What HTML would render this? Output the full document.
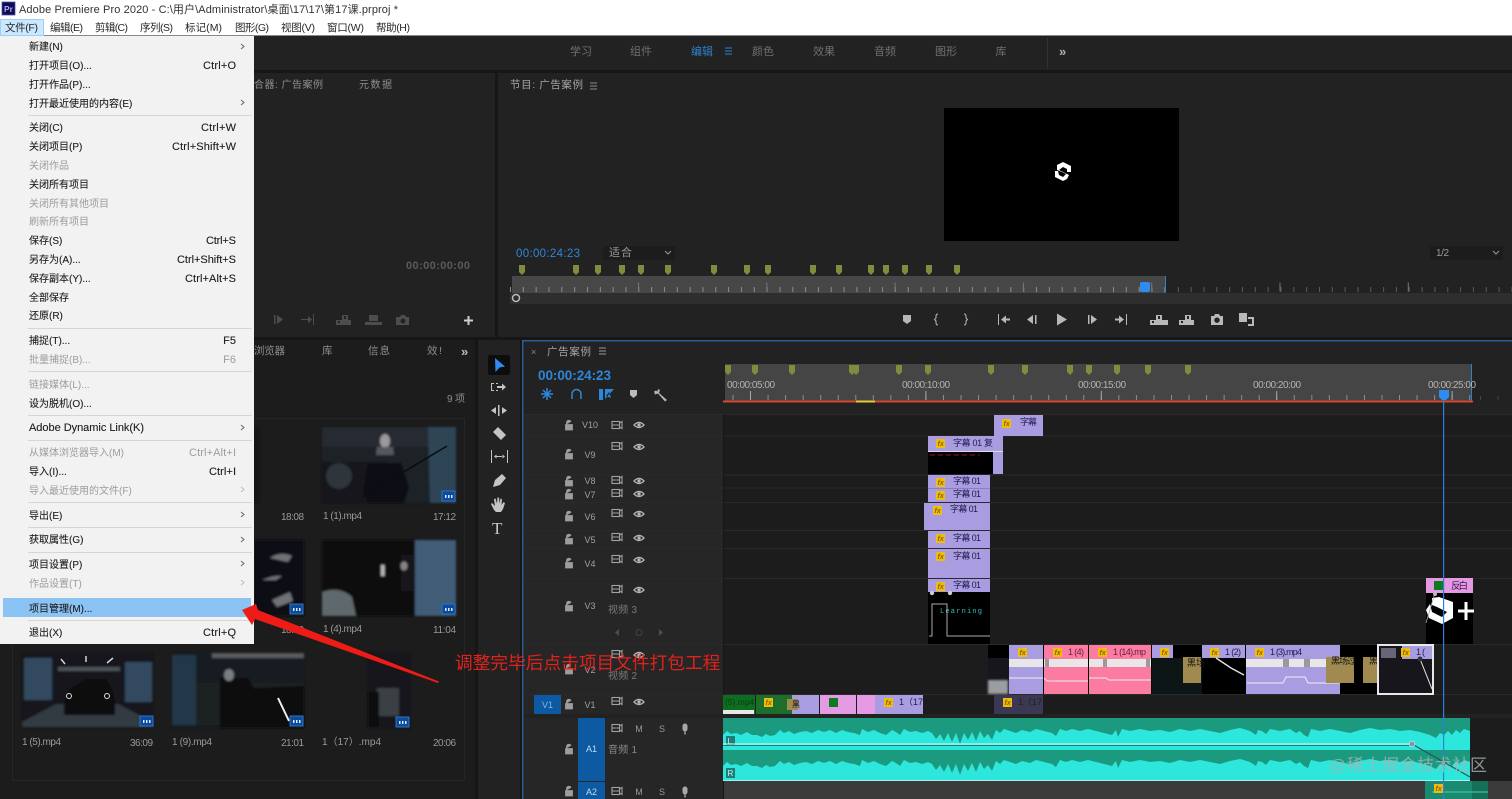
<!DOCTYPE html>
<html><head><meta charset="utf-8"><title>Adobe Premiere Pro 2020</title>
<style>
html,body{margin:0;padding:0;width:1512px;height:799px;overflow:hidden;background:#171717}
svg{display:block;position:absolute;left:0;top:0;font-family:"Liberation Sans","Noto Sans CJK SC",sans-serif}
.m text{font-size:10px;fill:#1e1e1e;stroke:#1e1e1e;stroke-width:.12}
.m .d{fill:#9c9c9c;stroke:none}
.m .r{text-anchor:end;font-size:11px}
.h{font-size:10px;fill:#8e8e8e}
.t{font-size:10px;fill:#8c8c8c}
.b{font-size:10px;fill:#9a9a9a}
.c{font-size:9px;fill:#221c50}
.f{font-size:7px;font-style:italic;font-weight:bold;fill:#8a6a00}
.l{font-size:9px;fill:#a8a8a8}
.tk{font-size:9px;fill:#a0a0a0;text-anchor:middle}
</style></head><body>
<svg width="1512" height="799" viewBox="0 0 1512 799" xmlns="http://www.w3.org/2000/svg">
<defs>
<filter id="bl" x="-10%" y="-10%" width="120%" height="120%"><feGaussianBlur stdDeviation="1"/></filter>
<filter id="s" x="-2%" y="-2%" width="104%" height="104%"><feGaussianBlur stdDeviation="0.3"/></filter>
<path id="mk" d="M-3-5h6v7l-3 3-3-3z" fill="#7f8b3c"/>
<path id="lk" d="M-3.500-.5h7v5.500h-7zM-2.500-.5v-2a2.400 2.400 0 0 1 4.600-.8" fill="#9d9d9d" stroke="#9d9d9d" stroke-width=".8"/>
<g id="fl" fill="none" stroke="#a0a0a0" stroke-width="1.100"><rect x="-5" y="-3.500" width="7.500" height="7"/><path d="M-5 0h7.500M2.500-2l2.500-1.500v7L2.500 2"/></g>
<g id="ey"><path d="M-5 0q5-5 10 0q-5 5-10 0z" fill="none" stroke="#b4b4b4" stroke-width="1.300"/><circle r="1.700" fill="#b4b4b4"/></g>
<g id="bd"><rect x="0" y="0" width="13" height="10" fill="#0d4c9a" stroke="#2f74c4" stroke-width="1"/><path d="M3 4h1.500v3H3zM6 4h1.500v3H6zM9 4h1.500v3H9z" fill="#dce9fa"/></g>
<g id="mic" fill="#a8a8a8"><rect x="-2.500" y="-5.500" width="5" height="8" rx="2.500"/><path d="M-.7 2.500h1.400v3h-1.400z"/></g>
<path id="wv" d="M723 735L727 731L731 734L736 733L741 735L747 732L752 735L757 735L762 737L766 734L770 736L775 735L780 730L784 733L789 731L794 734L800 732L806 731L812 733L818 730L824 732L830 730L836 733L842 730L848 732L854 733L860 735L862 729L868 732L874 730L880 733L886 735L892 730L896 732L900 735L904 729L910 732L916 731L922 733L928 731L932 733L936 739L940 734L944 741L948 733L952 742L956 733L960 744L964 733L968 740L972 732L976 741L980 731L984 738L988 734L992 740L996 730L1000 733L1004 729L1010 731L1016 733L1022 730L1030 732L1036 729L1044 731L1052 733L1056 736L1060 729L1066 731L1072 729L1080 731L1088 729L1096 731L1104 733L1112 735L1116 730L1118 737L1122 729L1130 731L1140 729L1150 731L1160 730L1170 732L1180 729L1190 731L1200 729L1210 731L1220 733L1230 730L1240 728L1250 731L1256 735L1258 730L1262 731L1266 734L1270 729L1280 731L1290 729L1296 733L1300 731L1304 735L1308 737L1311 729L1320 731L1330 729L1340 731L1350 733L1360 730L1370 728L1380 730L1390 729L1400 731L1410 730L1420 732L1430 735L1436 738L1440 733L1444 735L1448 731L1452 735L1456 730L1460 733L1464 729L1470 731V750H723z" fill="#2de7dc"/>
</defs>
<g filter="url(#s)">
<rect width="1512" height="799" fill="#171717"/>
<!-- top bar -->
<rect width="1512" height="36" fill="#fff"/>
<rect y="35" width="1512" height="1" fill="#888"/>
<rect x="2" y="2" width="13" height="13" fill="#100a50" stroke="#5550b0" stroke-width=".8"/>
<text x="4" y="12" font-size="8.500" font-weight="bold" fill="#b5a8ff">Pr</text>
<text x="19" y="13" font-size="11" fill="#333" textLength="379">Adobe Premiere Pro 2020 - C:\用户\Administrator\桌面\17\17\第17课.prproj *</text>
<rect x="0.500" y="19.500" width="43" height="16" fill="#cce8ff" stroke="#9cd0f5"/>
<g font-size="10.500" fill="#262626">
<text x="5" y="31" textLength="33">文件(F)</text><text x="50" y="31" textLength="33">编辑(E)</text><text x="95" y="31" textLength="33">剪辑(C)</text><text x="140" y="31" textLength="33">序列(S)</text><text x="185" y="31" textLength="37">标记(M)</text><text x="235" y="31" textLength="34">图形(G)</text><text x="281" y="31" textLength="34">视图(V)</text><text x="327" y="31" textLength="37">窗口(W)</text><text x="376" y="31" textLength="34">帮助(H)</text>
</g>
<!-- workspace bar -->
<rect y="36" width="1512" height="34" fill="#232323"/>
<g font-size="11" fill="#6f6f6f" text-anchor="middle"><text x="581" y="55">学习</text><text x="641" y="55">组件</text><text x="702" y="55" fill="#2d80d0">编辑</text><text x="763" y="55">颜色</text><text x="824" y="55">效果</text><text x="885" y="55">音频</text><text x="946" y="55">图形</text><text x="1001" y="55">库</text></g>
<path d="M725 48h7M725 51h7M725 54h7" stroke="#2d80d0" stroke-width="1"/>
<rect x="1047" y="38" width="1" height="31" fill="#333"/>
<text x="1059" y="56" font-size="13" font-weight="bold" fill="#b0b0b0">»</text>
<!-- left source panel -->
<rect x="254" y="73" width="241" height="264" fill="#232323"/>
<text x="254" y="88" class="h" textLength="69">合器: 广告案例</text>
<text x="359" y="88" class="h" textLength="33">元数据</text>
<text x="406" y="269" font-size="11" font-weight="bold" fill="#5a5a5a" textLength="64">00:00:00:00</text>
<g fill="#4e4e4e"><path d="M274 315h1.500v9H274zM277 315l6 4.500-6 4.500z"/><path d="M301 319h7v-3l4 3.500-4 3.500v-3h-7zM313 314h1v11h-1z"/><path d="M336 320h6v-5h6v5h3v5h-15zM338 321v2h2v-2zM344 316v3h2v-3z"/><path d="M365 322h17v3h-17zM369 315h9v6h-9z"/><path d="M396 317h4l1-2h4l1 2h3v8h-13zM403 318.500a2.500 2.500 0 1 0 .01 0z"/></g>
<path d="M468.500 316v9M464 320.500h9" stroke="#cfcfcf" stroke-width="2"/>
<!-- program panel -->
<rect x="498" y="73" width="1014" height="264" fill="#232323"/>
<text x="510" y="88" font-size="10.500" fill="#a4a4a4" textLength="73">节目: 广告案例</text>
<path d="M590 83h7M590 86h7M590 89h7" stroke="#8a8a8a"/>
<rect x="944" y="108" width="235" height="133" fill="#000"/>
<path d="M1063 162l8 4v6h-4v-3l-4-2-4 3 4 2 6 3-2 4-4 2-8-4v-6h3l1 4 4 2 3-3-4-2-5-2v-5z" fill="#fff"/>
<text x="516" y="257" font-size="11.500" fill="#2f86dc" textLength="64">00:00:24:23</text>
<rect x="603" y="246" width="72" height="14" fill="#1c1c1c"/><text x="609" y="256" font-size="11" fill="#9a9a9a" textLength="23">适合</text><path d="M665 251l3 3 3-3" fill="none" stroke="#999"/>
<rect x="1430" y="246" width="73" height="14" fill="#1c1c1c"/><text x="1436" y="256" font-size="10" fill="#9a9a9a" textLength="13">1/2</text><path d="M1493 251l3 3 3-3" fill="none" stroke="#999"/>
<use href="#mk" x="522" y="270"/><use href="#mk" x="576" y="270"/><use href="#mk" x="598" y="270"/><use href="#mk" x="622" y="270"/><use href="#mk" x="641" y="270"/><use href="#mk" x="668" y="270"/><use href="#mk" x="714" y="270"/><use href="#mk" x="747" y="270"/><use href="#mk" x="768" y="270"/><use href="#mk" x="813" y="270"/><use href="#mk" x="839" y="270"/><use href="#mk" x="871" y="270"/><use href="#mk" x="886" y="270"/><use href="#mk" x="905" y="270"/><use href="#mk" x="929" y="270"/><use href="#mk" x="957" y="270"/>
<rect x="512" y="276" width="653" height="17" fill="#464646"/>
<rect x="510" y="293" width="1002" height="11" fill="#2e2e2e"/>
<line x1="510" y1="289.500" x2="1165" y2="289.500" stroke="#8e8e8e" stroke-width="5" stroke-dasharray="1 11.830"/>
<line x1="1165" y1="289.500" x2="1512" y2="289.500" stroke="#5a5a5a" stroke-width="5" stroke-dasharray="1 11.830"/>
<line x1="638" y1="287" x2="1512" y2="287" stroke="#777" stroke-width="9" stroke-dasharray="1 127.300"/>
<rect x="1165" y="276" width="1" height="17" fill="#2d80d0"/>
<rect x="1140" y="282" width="10" height="10" rx="2" fill="#2d8cf0"/>
<circle cx="516" cy="298" r="3.500" fill="none" stroke="#bbb" stroke-width="1.500"/>
<!-- transport -->
<g fill="#b8b8b8">
<path d="M903 315h8v6l-4 3-4-3z"/>
<path d="M938 314q-2 0-2 2v2l-1.500 1.500 1.500 1.500v2q0 2 2 2" fill="none" stroke="#b8b8b8"/>
<path d="M964 314q2 0 2 2v2l1.500 1.500-1.500 1.500v2q0 2-2 2" fill="none" stroke="#b8b8b8"/>
<path d="M998 314h1v11h-1zM1001 319.500l5-4v3h4v2h-4v3z"/>
<path d="M1033 315v9l-6-4.500zM1035 315h1.500v9H1035z"/>
<path d="M1057 313.500l10 6-10 6z"/>
<path d="M1088 315h1.500v9H1088zM1091 315l6 4.500-6 4.500z"/>
<path d="M1115 318.500h4v-3l5 4-5 4v-3h-4zM1126 314h1v11h-1z"/>
<path d="M1150 320h6v-5h6v5h6v5h-18zM1152 321v2h2v-2zM1158 316v3h2v-3z"/>
<path d="M1179 320h6v-5h6v5h3v5h-15zM1181 321v2h2v-2zM1187 316v3h2v-3z"/>
<path d="M1211 316h3l1-2h4l1 2h3v9h-12zM1217 317.500a2.700 2.700 0 1 0 .01 0z"/>
<path d="M1239 313h8v9h-8z"/><path d="M1248 317h6v9h-6v-2h4v-5h-4z"/>
</g>
<!-- project panel -->
<rect x="0" y="340" width="475" height="459" fill="#1f1f1f"/>
<g font-size="10.500" fill="#8c8c8c"><text x="254" y="354" textLength="31">浏览器</text><text x="322" y="354">库</text><text x="368" y="354" textLength="22">信息</text><text x="427" y="354" textLength="15">效!</text></g>
<text x="461" y="356" font-size="13" font-weight="bold" fill="#bcbcbc">»</text>
<text x="447" y="402" class="t" textLength="18">9 项</text>
<rect x="12.500" y="418.500" width="452" height="362" fill="#1b1b1b" stroke="#272727"/>
<!-- thumbs -->
<g filter="url(#bl)">
<rect x="254" y="427" width="5" height="76" fill="#141618"/>
<rect x="322" y="427" width="134" height="76" fill="#1e2327"/>
<rect x="322" y="427" width="120" height="20" fill="#262c30"/>
<path d="M428 427h28v76h-26z" fill="#2e4557"/>
<rect x="322" y="462" width="65" height="41" fill="#15181b"/>
<ellipse cx="339" cy="476" rx="13" ry="13" fill="#2e363b"/>
<ellipse cx="385" cy="441" rx="5" ry="7" fill="#9d979e"/>
<path d="M377 447h16l1 8h-18z" fill="#55595e"/>
<path d="M368 463h33l8 24-5 16h-36l-5-12z" fill="#0e1013"/>
</g>
<path d="M362 497L447 446" stroke="#08090a" stroke-width="1.600"/>
<use href="#bd" x="442" y="491"/>
<g filter="url(#bl)">
<rect x="254" y="540" width="50" height="76" fill="#101113"/>
<path d="M270 558q10-7 22-2l-4 6-9-2zM262 580q12-5 20-4l-6 4zM272 600l18-8 3 9-16 6z" fill="#6e7276"/>
<rect x="322" y="540" width="134" height="76" fill="#0b0d10"/>
<rect x="415" y="540" width="41" height="76" fill="#3f5c76"/>
<rect x="401" y="555" width="12" height="36" fill="#15171a"/>
<ellipse cx="404" cy="566" rx="3.500" ry="4.500" fill="#8a8182"/>
<rect x="381" y="565" width="3.500" height="11" fill="#b8b8b8"/>
<path d="M322 592q18-6 30 5l4 19h-34z" fill="#5f686c"/>
</g>
<use href="#bd" x="290" y="604"/><use href="#bd" x="442" y="604"/>
<g filter="url(#bl)">
<rect x="22" y="653" width="131" height="75" fill="#14181c"/>
<rect x="24" y="658" width="28" height="42" fill="#33495e"/>
<rect x="125" y="662" width="27" height="40" fill="#33495e"/>
<rect x="58" y="667" width="62" height="4" fill="#4a5256"/>
<path d="M22 722l34-18h62l35 18v5H22z" fill="#333b42"/>
<path d="M86 679h20l6 10 3 13v13H64v-13l6-13z" fill="#080a0c"/>
<rect x="172" y="653" width="132" height="75" fill="#191d21"/>
<rect x="172" y="655" width="24" height="70" fill="#213748"/>
<rect x="212" y="653" width="92" height="5" fill="#565c60"/>
<rect x="196" y="683" width="108" height="42" fill="#1e2124"/>
<path d="M220 678h28l6 10 50-2v42h-84z" fill="#0a0b0d"/>
<ellipse cx="229" cy="675" rx="5" ry="6" fill="#7a7d82"/>
<rect x="368" y="653" width="42" height="75" fill="#16191c"/>
<rect x="377" y="688" width="22" height="28" fill="#3a4044"/>
<rect x="368" y="692" width="11" height="34" fill="#0a0a0c"/>
</g>
<path d="M278 698L289 721" stroke="#eee" stroke-width="2"/>
<path d="M61 659l4 5M113 658l-6 5M86 656v6" stroke="#cfd5d8" stroke-width="1.500"/>
<circle cx="69" cy="696" r="2.500" fill="none" stroke="#ddd"/><circle cx="107" cy="696" r="2.500" fill="none" stroke="#ddd"/>
<use href="#bd" x="140" y="716"/><use href="#bd" x="290" y="716"/><use href="#bd" x="396" y="717"/>
<g class="b">
<text x="281" y="520" textLength="23">18:08</text><text x="323" y="519" textLength="39">1 (1).mp4</text><text x="433" y="520" textLength="23">17:12</text>
<text x="281" y="633" textLength="23">18:10</text><text x="323" y="632" textLength="39">1 (4).mp4</text><text x="433" y="633" textLength="23">11:04</text>
<text x="22" y="745" textLength="39">1 (5).mp4</text><text x="130" y="746" textLength="23">36:09</text>
<text x="172" y="745" textLength="40">1 (9).mp4</text><text x="281" y="746" textLength="23">21:01</text>
<text x="322" y="745" textLength="59">1（17）.mp4</text><text x="433" y="746" textLength="23">20:06</text>
</g>
<!-- tool panel -->
<rect x="478" y="340" width="42" height="459" fill="#232323"/>
<rect x="488" y="355" width="22" height="20" rx="2" fill="#111"/>
<path d="M495 358L505 366.500L499.500 367.500L495.500 372z" fill="#2d8cf0"/>
<g fill="#c4c4c4">
<path d="M491 383h3v1h-3zM491 390h3v1h-3zM491 383h1v8h-1zM496 383h2v1h-2zM496 390h2v1h-2z"/><path d="M497 386h5v-2.500l4 3.500-4 3.500V388h-5z"/>
<path d="M498 405h1.500v11H498zM491 410.500l5-3.500v7zM507 410.500l-5-3.500v7z"/>
<path d="M493 432l5-5 8 8-5 5z"/>
<path d="M491 450h1v13h-1zM507 450h1v13h-1zM494 456.500l2.500-2v4zM505 456.500l-2.500-2v4zM496 456h7v1h-7z"/>
<path d="M493 487l2-7 7-6 4 4-6 7z"/>
<path d="M494 510l-3-6 1-1 3 3-1-7 1.500-.5 1.500 5 .5-6h1.500l.5 6 1-5 1.500.5-.5 6 2-3 1.500 1-2 6-2 3h-5z"/>
</g>
<text x="492" y="534" font-size="17" fill="#c8c8c8" font-family="Liberation Serif,serif">T</text>
<!-- timeline panel -->
<rect x="522" y="340" width="990" height="459" fill="#1e1e1e"/>
<rect x="522" y="340" width="990" height="1.500" fill="#2b5f94"/>
<rect x="522" y="340" width="1.500" height="459" fill="#2b5f94"/>
<rect x="524" y="342" width="199" height="457" fill="#262626"/>
<rect x="524" y="342" width="988" height="72" fill="#232323"/>
<text x="531" y="355" font-size="9" fill="#888">×</text>
<text x="547" y="355" font-size="10.500" fill="#a4a4a4" textLength="44">广告案例</text>
<path d="M599 348h7M599 351h7M599 354h7" stroke="#9a9a9a"/>
<text x="538" y="380" font-size="13.500" font-weight="bold" fill="#2f86dc" textLength="73">00:00:24:23</text>
<g fill="none" stroke="#2f86dc" stroke-width="1.500"><path d="M547 388v12M541 394h12M543 390l8 8M551 390l-8 8"/><path d="M572 399v-5a4.500 4.500 0 0 1 9 0v5"/></g>
<path d="M599 389h4v11h-4zM605 389h9l-9 10zM606 396l5 2-2-6" fill="#2f86dc"/>
<path d="M630 390h7v5l-3.500 3-3.500-3z" fill="#bbb"/>
<path d="M658 389l2 1-1 3 8 7-2 1.500-7-8-3 1-1-3 2-1 1.500 1z" fill="#b5b5b5"/>
<!-- ruler -->
<rect x="725" y="364" width="747" height="37" fill="#454545"/>
<line x1="732.500" y1="397.500" x2="1472" y2="397.500" stroke="#8e8e8e" stroke-width="5" stroke-dasharray="1 16.540"/>
<line x1="1480" y1="398" x2="1512" y2="398" stroke="#444" stroke-width="4" stroke-dasharray="1 16.540"/>
<line x1="750" y1="395.500" x2="1472" y2="395.500" stroke="#a8a8a8" stroke-width="9" stroke-dasharray="1 174.400"/>
<rect x="1471" y="364" width="1" height="37" fill="#2d80d0"/>
<rect x="723" y="400.500" width="750" height="2" fill="#d8442a"/>
<rect x="856" y="400.500" width="19" height="2" fill="#e8cc30"/>
<use href="#mk" x="728" y="370"/><use href="#mk" x="755" y="370"/><use href="#mk" x="792" y="370"/><use href="#mk" x="852" y="370"/><use href="#mk" x="856" y="370"/><use href="#mk" x="899" y="370"/><use href="#mk" x="928" y="370"/><use href="#mk" x="991" y="370"/><use href="#mk" x="1025" y="370"/><use href="#mk" x="1070" y="370"/><use href="#mk" x="1089" y="370"/><use href="#mk" x="1117" y="370"/><use href="#mk" x="1148" y="370"/><use href="#mk" x="1188" y="370"/>
<g font-size="10" fill="#b4b4b4"><text x="727" y="388" textLength="48">00:00:05:00</text><text x="902" y="388" textLength="48">00:00:10:00</text><text x="1078" y="388" textLength="48">00:00:15:00</text><text x="1253" y="388" textLength="48">00:00:20:00</text><text x="1428" y="388" textLength="48">00:00:25:00</text></g>
<!-- row lines -->
<g fill="#2b2b2b"><rect x="524" y="414" width="988" height="1"/><rect x="524" y="435.500" width="988" height="1"/><rect x="524" y="474.500" width="988" height="1"/><rect x="524" y="487.500" width="988" height="1"/><rect x="524" y="502" width="988" height="1"/><rect x="524" y="530" width="988" height="1"/><rect x="524" y="548" width="988" height="1"/><rect x="524" y="578" width="988" height="1"/><rect x="524" y="644" width="988" height="1"/><rect x="524" y="694" width="988" height="1"/></g>
<rect x="723" y="414" width="1" height="385" fill="#151515"/>
<rect x="524" y="714" width="988" height="4" fill="#232323"/>
<rect x="724" y="781" width="788" height="18" fill="#3b3b3b"/>
<!-- track headers -->
<use href="#lk" x="569" y="425"/><use href="#lk" x="569" y="454"/><use href="#lk" x="569" y="481"/><use href="#lk" x="569" y="494"/><use href="#lk" x="569" y="516"/><use href="#lk" x="569" y="539"/><use href="#lk" x="569" y="563"/><use href="#lk" x="569" y="606"/><use href="#lk" x="569" y="669"/><use href="#lk" x="569" y="704"/><use href="#lk" x="569" y="749"/><use href="#lk" x="569" y="791"/>
<g class="tk"><text x="590" y="428" class="tk">V10</text><text x="590" y="458" class="tk">V9</text><text x="590" y="484" class="tk">V8</text><text x="590" y="498" class="tk">V7</text><text x="590" y="520" class="tk">V6</text><text x="590" y="543" class="tk">V5</text><text x="590" y="567" class="tk">V4</text><text x="590" y="609" class="tk">V3</text><text x="590" y="673" class="tk">V2</text><text x="590" y="708" class="tk">V1</text></g>
<use href="#fl" x="617" y="425"/><use href="#fl" x="617" y="446"/><use href="#fl" x="617" y="480"/><use href="#fl" x="617" y="493"/><use href="#fl" x="617" y="513"/><use href="#fl" x="617" y="537"/><use href="#fl" x="617" y="559"/><use href="#fl" x="617" y="589"/><use href="#fl" x="617" y="654"/><use href="#fl" x="617" y="701"/><use href="#fl" x="617" y="728"/><use href="#fl" x="617" y="791"/>
<use href="#ey" x="639" y="425"/><use href="#ey" x="639" y="447"/><use href="#ey" x="639" y="481"/><use href="#ey" x="639" y="494"/><use href="#ey" x="639" y="514"/><use href="#ey" x="639" y="538"/><use href="#ey" x="639" y="560"/><use href="#ey" x="639" y="590"/><use href="#ey" x="639" y="655"/><use href="#ey" x="639" y="702"/>
<text x="608" y="613" font-size="10" fill="#7a7a7a" textLength="29">视频 3</text>
<text x="608" y="679" font-size="10" fill="#7a7a7a" textLength="29">视频 2</text>
<text x="608" y="753" font-size="10" fill="#8a8a8a" textLength="29">音频 1</text>
<path d="M619 629v7l-4-3.500zM659 629v7l4-3.500z" fill="#4e4e4e"/><circle cx="639" cy="632.500" r="3" fill="none" stroke="#444"/>
<rect x="534" y="695" width="27" height="19" fill="#0b5aa2"/><text x="547.500" y="708" class="tk" style="fill:#86b8e6">V1</text>
<rect x="578" y="718" width="27" height="63" fill="#0b5aa2"/><text x="591.500" y="752" class="tk" style="fill:#c4dcf4">A1</text>
<rect x="578" y="782" width="27" height="17" fill="#0b5aa2"/><text x="591.500" y="795" class="tk" style="fill:#c4dcf4">A2</text>
<g font-size="9" fill="#999" text-anchor="middle"><text x="639" y="732">M</text><text x="662" y="732">S</text><text x="639" y="795">M</text><text x="662" y="795">S</text></g>
<use href="#mic" x="685" y="729"/><use href="#mic" x="685" y="792"/>
<!-- V clips -->
<g fill="#a99ce0">
<rect x="994" y="415" width="49" height="21"/>
<rect x="928" y="436" width="75" height="16"/><rect x="993" y="452" width="10" height="22"/>
<rect x="928" y="475" width="62" height="27"/>
<rect x="924" y="503" width="66" height="27"/>
<rect x="928" y="531" width="62" height="17"/>
<rect x="928" y="549" width="62" height="29"/>
<rect x="928" y="579" width="62" height="13"/>
</g>
<rect x="928" y="452" width="65" height="22" fill="#000"/><path d="M930 455h50" stroke="#a01030" stroke-width="1" stroke-dasharray="5 3"/>
<rect x="928" y="592" width="62" height="52" fill="#000"/>
<text x="940" y="613" font-size="7" fill="#2fc0c0" letter-spacing="1.200" font-family="Liberation Mono,monospace">Learning</text>
<path d="M929 636h3v-32h15v32h43" fill="none" stroke="#aaa"/>
<circle cx="932" cy="593" r="2.200" fill="#ccc"/><circle cx="950" cy="593" r="2.200" fill="#ccc"/>
<rect x="928" y="488" width="62" height="1" fill="#8a80c0"/><rect x="928" y="451" width="75" height="1" fill="#ddd"/>
<g>
<rect x="1002" y="419" width="9" height="9" fill="#f0bc10"/><text x="1003.500" y="426" class="f">fx</text><text x="1020" y="425" class="c" textLength="17">字幕</text>
<rect x="936" y="439" width="9" height="9" fill="#f0bc10"/><text x="937.500" y="446" class="f">fx</text><text x="953" y="446" class="c" textLength="40">字幕 01 复</text>
<rect x="936" y="478" width="9" height="9" fill="#f0bc10"/><text x="937.500" y="485" class="f">fx</text><text x="953" y="484" class="c" textLength="28">字幕 01</text>
<rect x="936" y="491" width="9" height="9" fill="#f0bc10"/><text x="937.500" y="498" class="f">fx</text><text x="953" y="497" class="c" textLength="28">字幕 01</text>
<rect x="933" y="506" width="9" height="9" fill="#f0bc10"/><text x="934.500" y="513" class="f">fx</text><text x="950" y="512" class="c" textLength="28">字幕 01</text>
<rect x="936" y="534" width="9" height="9" fill="#f0bc10"/><text x="937.500" y="541" class="f">fx</text><text x="953" y="541" class="c" textLength="28">字幕 01</text>
<rect x="936" y="552" width="9" height="9" fill="#f0bc10"/><text x="937.500" y="559" class="f">fx</text><text x="953" y="559" class="c" textLength="28">字幕 01</text>
<rect x="936" y="582" width="9" height="9" fill="#f0bc10"/><text x="937.500" y="589" class="f">fx</text><text x="953" y="588" class="c" textLength="28">字幕 01</text>
</g>
<!-- right V3 -->
<rect x="1426" y="578" width="47" height="15" fill="#e39ae2"/>
<rect x="1426" y="593" width="47" height="51" fill="#000"/>
<rect x="1434" y="581" width="9" height="9" fill="#0e7a22"/>
<text x="1451" y="589" font-size="9.500" fill="#40185a" textLength="17">反白</text>
<path d="M1439 597l14 5v16l-11 6-13-6-3-8 4-6 2 8 10 5 5-5-10-5-5-2v-7z" fill="#fff"/>
<path d="M1466 602v18M1458 611h16" stroke="#fff" stroke-width="3"/>
<path d="M1435 593l-9 30" stroke="#aaa" stroke-width=".8"/><circle cx="1435" cy="594" r="2" fill="#bbb"/>
<!-- V2 row -->
<rect x="988" y="645" width="445" height="49" fill="#050505"/>
<rect x="988" y="658" width="21" height="36" fill="#17191b"/><rect x="988" y="680" width="20" height="14" fill="#9a9ea0" filter="url(#bl)"/>
<rect x="1152" y="658" width="50" height="36" fill="#101315"/>
<g fill="#a99ce0"><rect x="1009" y="645" width="34" height="49"/><rect x="1152" y="645" width="21" height="13"/><rect x="1202" y="645" width="43" height="13"/><rect x="1246" y="645" width="94" height="49"/></g>
<g fill="#fb7ba0"><rect x="1044" y="645" width="44" height="49"/><rect x="1089" y="645" width="62" height="49"/></g>
<g fill="#e8e6e6"><rect x="1009" y="659" width="34" height="8"/><rect x="1044" y="659" width="44" height="8"/><rect x="1089" y="659" width="62" height="8"/><rect x="1246" y="659" width="94" height="8"/></g>
<g fill="#9a9a9a"><rect x="1045" y="659" width="4" height="8"/><rect x="1103" y="659" width="4" height="8"/><rect x="1146" y="659" width="4" height="8"/><rect x="1283" y="659" width="6" height="8"/><rect x="1304" y="659" width="6" height="8"/></g>
<path d="M1009 678h34M1044 678l3 3h41M1089 678h17l3 2h42M1247 683h36l3-6h19l3 6h32" fill="none" stroke="#eee" stroke-width="1"/>
<path d="M1216 658l15 10 13 7" stroke="#ddd" stroke-width="1.500" fill="none"/>
<g fill="#a08a50"><rect x="1183" y="657" width="18" height="26"/><rect x="1326" y="657" width="28" height="26"/><rect x="1363" y="657" width="29" height="26"/></g>
<g font-size="9" fill="#151515"><text x="1187" y="666">黑场</text><text x="1331" y="664" textLength="25">黑场过</text><text x="1369" y="664" textLength="25">黑场过</text></g>
<rect x="1378" y="645" width="55" height="49" fill="#16191c" stroke="#e8e8e8" stroke-width="2"/>
<rect x="1402" y="646" width="30" height="13" fill="#a99ce0"/>
<rect x="1381" y="648" width="15" height="10" fill="#667"/>
<path d="M1420 659l12 30" stroke="#eee" stroke-width="1"/><circle cx="1420" cy="659" r="2.500" fill="#334"/>
<g><rect x="1018" y="648" width="9" height="9" fill="#f0bc10"/><text x="1019.500" y="655" class="f">fx</text>
<rect x="1053" y="648" width="9" height="9" fill="#f0bc10"/><text x="1054.500" y="655" class="f">fx</text><text x="1068" y="655" class="c" style="fill:#6a2040" textLength="16">1 (4)</text>
<rect x="1098" y="648" width="9" height="9" fill="#f0bc10"/><text x="1099.500" y="655" class="f">fx</text><text x="1113" y="655" class="c" style="fill:#6a2040" textLength="33">1 (14).mp</text>
<rect x="1160" y="648" width="9" height="9" fill="#f0bc10"/><text x="1161.500" y="655" class="f">fx</text>
<rect x="1210" y="648" width="9" height="9" fill="#f0bc10"/><text x="1211.500" y="655" class="f">fx</text><text x="1225" y="655" class="c" textLength="16">1 (2)</text>
<rect x="1255" y="648" width="9" height="9" fill="#f0bc10"/><text x="1256.500" y="655" class="f">fx</text><text x="1270" y="655" class="c" textLength="32">1 (3).mp4</text>
<rect x="1401" y="648" width="9" height="9" fill="#f0bc10"/><text x="1402.500" y="655" class="f">fx</text><text x="1416" y="655" class="c" textLength="9">1 (</text></g>
<!-- V1 row -->
<rect x="723" y="695" width="32" height="19" fill="#0e6e22"/><rect x="723" y="710" width="31" height="4" fill="#e8e8e8"/><text x="725" y="705" font-size="8.500" fill="#0a3a10">(5).mp4</text>
<rect x="756" y="695" width="36" height="19" fill="#1c6e2a"/>
<rect x="792" y="695" width="27" height="19" fill="#a99ce0"/>
<rect x="787" y="699" width="11" height="11" fill="#a08a50"/>
<text x="792" y="707" font-size="8" fill="#111">黑</text>
<rect x="820" y="695" width="36" height="19" fill="#e59ae4"/><rect x="857" y="695" width="18" height="19" fill="#e59ae4"/>
<rect x="875" y="695" width="48" height="19" fill="#a99ce0"/>
<rect x="994" y="695" width="49" height="19" fill="#3b3752"/>
<rect x="764" y="698" width="9" height="9" fill="#f0bc10"/><text x="765.500" y="705" class="f">fx</text>
<rect x="829" y="698" width="9" height="9" fill="#0e7a22"/>
<rect x="884" y="698" width="9" height="9" fill="#f0bc10"/><text x="885.500" y="705" class="f">fx</text><text x="899" y="705" class="c" textLength="24">1（17</text>
<rect x="1003" y="698" width="9" height="9" fill="#f0bc10"/><text x="1004.500" y="705" class="f">fx</text><text x="1018" y="705" class="c" style="fill:#222" textLength="24">1（17</text>
<!-- audio -->
<rect x="723" y="718" width="747" height="63" fill="#1f9a80"/>
<use href="#wv"/><use href="#wv" y="31"/>
<rect x="723" y="780" width="747" height="1" fill="#a8f0ea"/>
<rect x="726" y="736" width="9" height="10" fill="#1f7f78"/><text x="727.500" y="744" font-size="8" fill="#c8f0ee">L</text>
<rect x="726" y="768" width="9" height="10" fill="#1f7f78"/><text x="727.500" y="776" font-size="8" fill="#c8f0ee">R</text>
<path d="M723 744h689" stroke="#d8f8f4" stroke-width="1"/><path d="M723 745.500h689" stroke="#1c7f74" stroke-width="1"/>
<path d="M1412 744L1470 777" stroke="#20585a" stroke-width="1.200"/>
<circle cx="1412" cy="744" r="2.800" fill="#7a98a0" stroke="#cde" stroke-width=".8"/>
<rect x="1425" y="781" width="63" height="18" fill="#1a8a70"/><rect x="1472" y="781" width="16" height="18" fill="#147058"/>
<path d="M1432 792h56" stroke="#3fd0b0"/>
<rect x="1434" y="784" width="9" height="9" fill="#f0bc10"/><text x="1435.500" y="791" class="f">fx</text>
<!-- playhead -->
<rect x="1443" y="394" width="1.200" height="405" fill="#2f7fd6"/>
<path d="M1439 390h10v7l-3 3h-4l-3-3z" fill="#2d8cf0"/>
<!-- file menu -->
<rect x="0" y="36" width="254" height="608" fill="#f2f2f2"/>
<g class="m">
<text x="29" y="50">新建(N)</text>
<text x="29" y="69">打开项目(O)...</text>
<text x="29" y="88">打开作品(P)...</text>
<text x="29" y="107">打开最近使用的内容(E)</text>
<text x="29" y="131">关闭(C)</text>
<text x="29" y="150">关闭项目(P)</text>
<text x="29" y="169" class="d">关闭作品</text>
<text x="29" y="188">关闭所有项目</text>
<text x="29" y="207" class="d">关闭所有其他项目</text>
<text x="29" y="225" class="d">刷新所有项目</text>
<text x="29" y="244">保存(S)</text>
<text x="29" y="263">另存为(A)...</text>
<text x="29" y="282">保存副本(Y)...</text>
<text x="29" y="301">全部保存</text>
<text x="29" y="319">还原(R)</text>
<text x="29" y="344">捕捉(T)...</text>
<text x="29" y="363" class="d">批量捕捉(B)...</text>
<text x="29" y="388" class="d">链接媒体(L)...</text>
<text x="29" y="407">设为脱机(O)...</text>
<text x="29" y="431" style="font-size:11px" textLength="115">Adobe Dynamic Link(K)</text>
<text x="29" y="456" class="d">从媒体浏览器导入(M)</text>
<text x="29" y="475">导入(I)...</text>
<text x="29" y="494" class="d">导入最近使用的文件(F)</text>
<text x="29" y="519">导出(E)</text>
<text x="29" y="543">获取属性(G)</text>
<text x="29" y="568">项目设置(P)</text>
<text x="29" y="587" class="d">作品设置(T)</text>
<rect x="3" y="598" width="248" height="19" style="fill:#8cc3f5;stroke:none"/>
<text x="29" y="612">项目管理(M)...</text>
<text x="29" y="636">退出(X)</text>
<text x="236" y="69" class="r" textLength="33">Ctrl+O</text>
<text x="236" y="131" class="r" textLength="35">Ctrl+W</text>
<text x="236" y="150" class="r" textLength="64">Ctrl+Shift+W</text>
<text x="236" y="244" class="r" textLength="30">Ctrl+S</text>
<text x="236" y="263" class="r" textLength="59">Ctrl+Shift+S</text>
<text x="236" y="282" class="r" textLength="51">Ctrl+Alt+S</text>
<text x="236" y="344" class="r">F5</text>
<text x="236" y="363" class="r d">F6</text>
<text x="236" y="456" class="r d" textLength="47">Ctrl+Alt+I</text>
<text x="236" y="475" class="r" textLength="27">Ctrl+I</text>
<text x="236" y="636" class="r" textLength="33">Ctrl+Q</text>
</g>
<g fill="none" stroke="#666" stroke-width="1"><path d="M241 44l3 2.500-3 2.500M241 100l3 2.500-3 2.500M241 425l3 2.500-3 2.500M241 512l3 2.500-3 2.500M241 537l3 2.500-3 2.500M241 561l3 2.500-3 2.500"/><path d="M241 487l3 2.500-3 2.500M241 580l3 2.500-3 2.500" stroke="#bbb"/></g>
<g fill="#d6d6d6"><rect x="28" y="115" width="224" height="1"/><rect x="28" y="328" width="224" height="1"/><rect x="28" y="371" width="224" height="1"/><rect x="28" y="415" width="224" height="1"/><rect x="28" y="440" width="224" height="1"/><rect x="28" y="502" width="224" height="1"/><rect x="28" y="527" width="224" height="1"/><rect x="28" y="552" width="224" height="1"/><rect x="28" y="620" width="224" height="1"/></g>
<!-- annotation -->
<path d="M242 610L256 604L258 610L439 681.500L438 683L255 619L252 625z" fill="#ee1c18"/>
<text x="455" y="669" font-size="17.700" fill="#e0231c">调整完毕后点击项目文件打包工程</text>
<text x="1329" y="771" font-size="17" fill="#a8b4b4" fill-opacity=".8" textLength="158">@稀土掘金技术社区</text>
</g>
</svg>
</body></html>
